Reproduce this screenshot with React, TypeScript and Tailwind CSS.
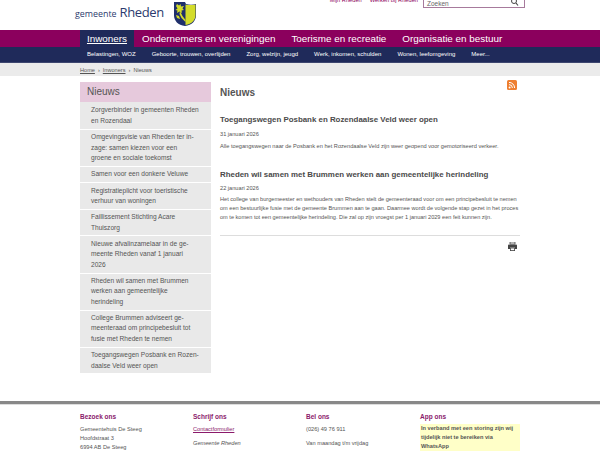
import React from "react";

const mainNav = ["Ondernemers en verenigingen", "Toerisme en recreatie", "Organisatie en bestuur"];
const subNav = [
  "Belastingen, WOZ",
  "Geboorte, trouwen, overlijden",
  "Zorg, welzijn, jeugd",
  "Werk, inkomen, schulden",
  "Wonen, leefomgeving",
  "Meer...",
];
const sideItems = [
  ["Zorgverbinder in gemeenten Rheden", "en Rozendaal"],
  ["Omgevingsvisie van Rheden ter in-", "zage: samen kiezen voor een", "groene en sociale toekomst"],
  ["Samen voor een donkere Veluwe"],
  ["Registratieplicht voor toeristische", "verhuur van woningen"],
  ["Faillissement Stichting Acare", "Thuiszorg"],
  ["Nieuwe afvalinzamelaar in de ge-", "meente Rheden vanaf 1 januari", "2026"],
  ["Rheden wil samen met Brummen", "werken aan gemeentelijke", "herindeling"],
  ["College Brummen adviseert ge-", "meenteraad om principebesluit tot", "fusie met Rheden te nemen"],
  ["Toegangswegen Posbank en Rozen-", "daalse Veld weer open"],
];

const Shield = () => (
  <svg width="24" height="26" viewBox="0 0 24 26" className="-mt-[1px] absolute left-[98px] top-[2px]">
    <path d="M1 1h11l1 2c3 1 7 1 10 0v11c0 6-4 10-11 11C5 24 1 20 1 14z" fill="#1f2f6b" />
    <path d="M12.500 3.500c3 .8 7 .8 10 0V14c0 5-3.600 9-10 10z" fill="#d3dc2a" />
    <path d="M4 3l2 1.500L7.500 3l.5 2.500 3-.5-1.500 2.500L11 9l-2.500.5.500 2.500-2.500-1.500L4 12l.5-2.500L2.500 9l2-1.500L3 5z" fill="#d3dc2a" />
    <path d="M7 10l2.500 5 3 4v2l-4-4-2-4z" fill="#d3dc2a" />
    <path d="M3 14l3 1 1 3-3-1z" fill="#d3dc2a" />
  </svg>
);

export default function App() {
  return (
    <div className="h-[471px] overflow-hidden bg-white font-['Liberation_Sans',Arial,sans-serif] text-[#444]">
      <header className="h-[30px] w-[440px] mx-auto flex justify-between">
        <div className="relative flex items-start -ml-[5px] pt-0.5">
          <span className="font-['Open_Sans',sans-serif] text-[#2c3a6e] text-[8.9px] leading-[12px] mt-[6px]">gemeente</span>
          <span className="font-['Open_Sans',sans-serif] text-[#2c3a6e] text-[13px] leading-[18px] tracking-[-0.4px] mt-[1px] ml-[3px]">Rheden</span>
          <Shield />
        </div>
        <div className="flex items-start -mr-[5px]">
          <span className="text-[5.7px] leading-[6px] text-[#8b005d] -mt-[3px] mr-[8px]">Mijn Rheden</span>
          <span className="text-[5.7px] leading-[6px] text-[#8b005d] -mt-[3px] mr-[5px]">Werken bij Rheden</span>
          <div className="w-[102px] h-[8px] border border-t-0 border-[#a77a9c] flex items-end justify-between px-[3px]">
            <span className="text-[6.5px] leading-[7px] text-[#666]">Zoeken</span>
            <svg width="8" height="7" viewBox="0 0 8 7" className="mr-[2px]">
              <circle cx="3" cy="1" r="2.500" fill="none" stroke="#444" strokeWidth="1" />
              <path d="M5 3l2 2.500" stroke="#444" strokeWidth="1.200" />
            </svg>
          </div>
        </div>
      </header>

      <nav className="h-[17px] bg-[#8b005d]">
        <div className="w-[440px] mx-auto flex h-full">
          <a className="bg-[#1f2a5a] w-[54px] text-center text-[9.9px] leading-[17px] text-white underline">Inwoners</a>
          <div className="flex gap-[16px] pl-[8px]">
            {mainNav.map((n) => (
              <a key={n} className="text-[9.9px] leading-[17px] text-white whitespace-nowrap">{n}</a>
            ))}
          </div>
        </div>
      </nav>
      <nav className="h-[16px] bg-[#1f2a5a] border-b border-[#3d466f]">
        <div className="w-[440px] mx-auto flex gap-[16px] pl-[7px]">
          {subNav.map((n) => (
            <a key={n} className="text-[6px] leading-[15px] text-white whitespace-nowrap">{n}</a>
          ))}
        </div>
      </nav>
      <div className="h-[13px] bg-[#ebebeb]">
        <div className="w-[440px] mx-auto flex items-center gap-[3px] text-[5.6px] leading-[14px] text-[#555]">
          <a className="underline">Home</a>
          <span>›</span>
          <a className="underline">Inwoners</a>
          <span>›</span>
          <span>Nieuws</span>
        </div>
      </div>

      <main className="w-[440px] mx-auto flex gap-[9px] pt-[6px] h-[325px]">
        <aside className="w-[131px] shrink-0">
          <h2 className="h-[20px] bg-[#e6c9dc] pl-[7px] text-[10px] leading-[19px] text-[#555]">Nieuws</h2>
          <ul className="flex flex-col bg-[#e9e9e9] pt-[1px]">
            {sideItems.map((item) => (
              <li key={item[0]} className="border-b border-white last:border-b-0 pl-[11px] py-[2.45px]">
                {item.map((line) => (
                  <div key={line} className="text-[6.6px] leading-[10.4px] text-[#555] whitespace-nowrap">{line}</div>
                ))}
              </li>
            ))}
          </ul>
        </aside>

        <section className="w-[300px]">
          <div className="flex justify-between items-start">
            <h1 className="text-[10px] leading-[14px] font-bold text-[#555] mt-[4px]">Nieuws</h1>
            <svg width="10" height="10" viewBox="0 0 10 10" className="mr-[3.5px] -mt-[2px]">
              <rect width="10" height="10" rx="1.500" fill="#ee7f31" />
              <circle cx="2.600" cy="7.400" r="1" fill="#fff" />
              <path d="M2 4.600a3.400 3.400 0 0 1 3.400 3.400M2 2.400A5.600 5.600 0 0 1 7.600 8" fill="none" stroke="#fff" strokeWidth="1" />
            </svg>
          </div>
          <h3 className="mt-[13.5px] text-[7.9px] leading-[12px] font-bold text-[#4a4a4a]">Toegangswegen Posbank en Rozendaalse Veld weer open</h3>
          <p className="mt-[4px] text-[5.65px] leading-[9px] text-[#555]">31 januari 2026</p>
          <p className="mt-[2px] text-[5.65px] leading-[10px] text-[#555]">Alle toegangswegen naar de Posbank en het Rozendaalse Veld zijn weer geopend voor gemotoriseerd verkeer.</p>
          <h3 className="mt-[18px] text-[7.9px] leading-[12px] font-bold text-[#4a4a4a]">Rheden wil samen met Brummen werken aan gemeentelijke herindeling</h3>
          <p className="mt-[3.5px] text-[5.65px] leading-[9px] text-[#555]">22 januari 2026</p>
          <p className="mt-[2px] text-[5.6px] leading-[9.2px] text-[#555] whitespace-nowrap">
            Het college van burgemeester en wethouders van Rheden stelt de gemeenteraad voor om een principebesluit te nemen<br />
            om een bestuurlijke fusie met de gemeente Brummen aan te gaan. Daarmee wordt de volgende stap gezet in het proces<br />
            om te komen tot een gemeentelijke herindeling. Die zal op zijn vroegst per 1 januari 2029 een feit kunnen zijn.
          </p>
          <div className="mt-[12px] border-t border-[#dddddd] flex justify-end pt-[6px] pr-[3px]">
            <svg width="9" height="9" viewBox="0 0 9 9">
              <path d="M2 0h5v2H2z" fill="none" stroke="#444" strokeWidth="0.800" />
              <path d="M0 3.500a1 1 0 0 1 1-1h7a1 1 0 0 1 1 1V7H7V5.500H2V7H0z" fill="#444" />
              <rect x="2.400" y="6" width="4.200" height="2.600" fill="none" stroke="#444" strokeWidth="0.800" />
            </svg>
          </div>
        </section>
      </main>

      <footer className="border-t-[3px] border-[#888] bg-white">
        <div className="h-[1px] bg-[#dddddd]" />
        <div className="w-[440px] mx-auto grid grid-cols-[113px_113px_114px_100px] pt-[7px]">
          <div>
            <h4 className="text-[6.5px] leading-[10px] font-bold text-[#8b1a6b]">Bezoek ons</h4>
            <div className="mt-[2.5px] text-[5.65px] leading-[9px] text-[#555]">
              <p>Gemeentehuis De Steeg</p>
              <p>Hoofdstraat 3</p>
              <p>6994 AB De Steeg</p>
            </div>
          </div>
          <div>
            <h4 className="text-[6.5px] leading-[10px] font-bold text-[#8b1a6b]">Schrijf ons</h4>
            <a className="block mt-[2.5px] text-[5.65px] leading-[9px] text-[#8b1a6b] underline">Contactformulier</a>
            <p className="mt-[5px] text-[5.65px] leading-[9px] italic text-[#555]">Gemeente Rheden</p>
          </div>
          <div>
            <h4 className="text-[6.5px] leading-[10px] font-bold text-[#8b1a6b]">Bel ons</h4>
            <p className="mt-[2.5px] text-[5.65px] leading-[9px] text-[#555]">(026) 49 76 911</p>
            <p className="mt-[5px] text-[5.65px] leading-[9px] text-[#555]">Van maandag t/m vrijdag</p>
          </div>
          <div>
            <h4 className="text-[6.5px] leading-[10px] font-bold text-[#8b1a6b]">App ons</h4>
            <p className="mt-[1.5px] h-[27px] bg-[#ffffc8] text-[5.65px] leading-[9px] font-bold text-[#555] pl-[1px]">
              In verband met een storing zijn wij<br />tijdelijk niet te bereiken via<br />WhatsApp
            </p>
          </div>
        </div>
      </footer>
    </div>
  );
}
